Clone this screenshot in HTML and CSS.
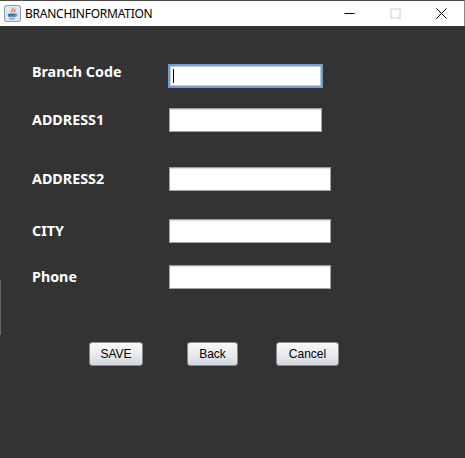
FILE: index.html
```html
<!DOCTYPE html>
<html lang="en">
<head>
<meta charset="UTF-8" />
<title>BRANCHINFORMATION</title>
<link rel="stylesheet" href="styles.css">
</head>
<body>

<div class="window">
  <div class="titlebar">
    <svg class="app-icon" width="17" height="17" viewBox="0 0 16 16">
      <rect x="0.500" y="0.500" width="15" height="15" rx="2" fill="#dfe8f2" stroke="#8ba0b8" />
      <path d="M8.500 2.500c1 1.500-2 2.500-1.500 4.500M10.500 4c.5 1-1.500 1.500-1 3" fill="none" stroke="#e0702a" stroke-width="1.200" />
      <path d="M4 8.500h6.500v1.500H4zM4 11h6.500M5 13h5" fill="#4a6f96" stroke="#4a6f96" stroke-width="0.800" />
      <path d="M10.500 8.500c2.500-.5 2.500 2-.5 2.300" fill="none" stroke="#4a6f96" stroke-width="0.800" />
    </svg>
    <span class="title">BRANCHINFORMATION</span>
    <div class="controls">
      <span class="ctl"><svg width="11" height="11" viewBox="0 0 11 11"><path d="M0.500 5.500h10" stroke="#000" /></svg></span>
      <span class="ctl"><svg width="11" height="11" viewBox="0 0 11 11"><rect x="1" y="1" width="9" height="9" fill="none" stroke="#ccc" /></svg></span>
      <span class="ctl"><svg width="11" height="11" viewBox="0 0 11 11"><path d="M0.500 0.500l10 10M10.500 0.500l-10 10" stroke="#000" /></svg></span>
    </div>
  </div>

  <form class="panel">
    <div class="row row-code">
      <label>Branch Code</label>
      <div class="field focused"><span class="caret"></span></div>
    </div>
    <div class="row row-addr1">
      <label>ADDRESS1</label>
      <div class="field short"></div>
    </div>
    <div class="row row-addr2">
      <label>ADDRESS2</label>
      <div class="field"></div>
    </div>
    <div class="row row-city">
      <label>CITY</label>
      <div class="field"></div>
    </div>
    <div class="row row-phone">
      <label>Phone</label>
      <div class="field"></div>
    </div>
    <div class="buttons">
      <button type="button" class="btn-save">SAVE</button>
      <button type="button" class="btn-back">Back</button>
      <button type="button" class="btn-cancel">Cancel</button>
    </div>
  </form>
  <div class="edge"></div>
</div>

</body>
</html>
```

FILE: styles.css
```css
html, body {
  margin: 0;
  padding: 0;
  background: #333333;
}
.window {
  position: relative;
  width: 465px;
  height: 458px;
  overflow: hidden;
  display: flex;
  flex-direction: column;
  background: #333333;
  font-family: "Liberation Sans", Arial, sans-serif;
}
/* sliver of the window behind, on the left edge */
.edge {
  position: absolute;
  left: 0;
  top: 280px;
  width: 1px;
  height: 55px;
  background: #666666;
}
.titlebar {
  height: 26px;
  box-sizing: border-box;
  background: #ffffff;
  border-top: 1px solid #4a4a4a;
  border-right: 1px solid #8a8a8a;
  display: flex;
  align-items: center;
  padding-left: 4px;
  flex-shrink: 0;
}
.app-icon {
  margin-right: 4px;
}
.title {
  margin-top: -1px;
  font-family: "Noto Sans", sans-serif;
  font-size: 12px;
  letter-spacing: -0.250px;
  color: #000000;
}
.controls {
  margin-left: auto;
  display: flex;
  align-items: center;
}
.ctl {
  width: 46px;
  height: 25px;
  display: flex;
  align-items: center;
  justify-content: center;
}
.panel {
  padding-left: 32px;
  display: flex;
  flex-direction: column;
}
.row {
  display: flex;
  align-items: center;
  height: 24px;
}
.row label {
  width: 137px;
  margin-top: -2px;
  font-family: "Noto Sans", sans-serif;
  font-weight: 700;
  font-size: 14.300px;
  color: #ffffff;
}
.row-code { margin-top: 38px; }
.row-code label { margin-top: -9px; }
.row-addr1 { margin-top: 20px; }
.row-addr2 { margin-top: 35px; }
.row-city { margin-top: 28px; }
.row-phone { margin-top: 22px; }
.field {
  width: 162px;
  height: 24px;
  box-sizing: border-box;
  background: #ffffff;
  border: 1px solid #a3a3a3;
  border-top-color: #9c9c9c;
  box-shadow: inset 0 1px 1px #dcdcdc;
  display: flex;
  align-items: center;
}
.field.short {
  width: 153px;
}
.field.focused {
  width: 155px;
  margin-left: -1px;
  border: 2px solid #6e9ed0;
  box-shadow: inset 0 0 0 1px #c4ccd6;
}
.caret {
  width: 1px;
  height: 14px;
  margin-left: 3px;
  background: #000000;
}
.buttons {
  display: flex;
  margin-top: 53px;
  margin-left: 57px;
}
.buttons button {
  height: 24px;
  padding: 0;
  font-family: "Liberation Sans", Arial, sans-serif;
  font-size: 12px;
  color: #000000;
  border: 1px solid #8a8a8a;
  border-radius: 3px;
  background: linear-gradient(#f8f9fb, #e8eaee 55%, #d2d6dd);
}
.btn-save { width: 54px; margin-right: 44px; }
.btn-back { width: 51px; margin-right: 38px; }
.btn-cancel { width: 63px; }
```
